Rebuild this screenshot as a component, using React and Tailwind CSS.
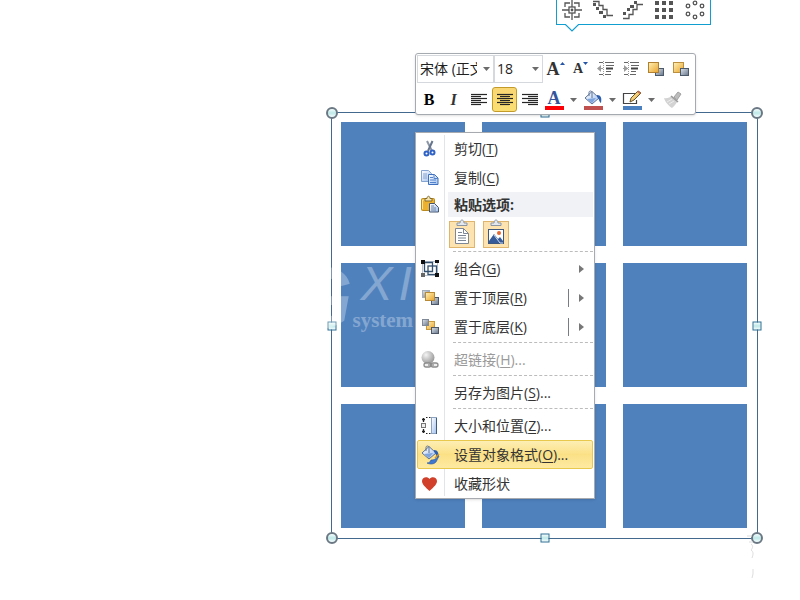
import React from "react";

const uiFont = "font-['Open_Sans','Noto_Sans_CJK_SC',sans-serif]";

/* ---------- layout gallery icons ---------- */

function GalleryIcon({ name }) {
  return (
    <svg width="22" height="20" viewBox="0 0 22 20" fill="none" stroke="#555" strokeWidth="1.3">
      {name === "center" && (
        <>
          <path d="M11 0v20M1 10h20" />
          <path d="M4 7V3h5M13 3h5v4M18 13v4h-5M9 17H4v-4" />
          <rect x="8" y="7" width="6" height="6" fill="#fff" />
          <circle cx="11" cy="10" r="1.4" fill="#555" stroke="none" />
        </>
      )}
      {name === "down" && (
        <>
          <path d="M1 1.500h6v4h4v4h4v6h6" />
          <path fill="#555" stroke="none" d="M1 3h3v3h-3zM4 7h3v3h-3zM7 11h4v3h-4zM11 15h3v3h-3z" />
        </>
      )}
      {name === "up" && (
        <>
          <path d="M1 18.500h6v-4h4v-5h4v-5h6" />
          <path fill="#555" stroke="none" d="M1 12h3v3h-3zM5 8h3v3h-3zM8 5h4v3h-4zM12 1h3v3h-3z" />
        </>
      )}
      {name === "grid" && (
        <path
          fill="#555"
          stroke="none"
          d="M2 1h4v4h-4zM9 1h4v4h-4zM16 1h4v4h-4zM2 8h4v4h-4zM9 8h4v4h-4zM16 8h4v4h-4zM2 15h4v4h-4zM9 15h4v4h-4zM16 15h4v4h-4z"
        />
      )}
      {name === "ring" && (
        <>
          <circle cx="11" cy="3" r="1.8" />
          <circle cx="18" cy="6" r="1.8" />
          <circle cx="18" cy="14" r="1.8" />
          <circle cx="11" cy="17" r="1.8" />
          <circle cx="4" cy="14" r="1.8" />
          <circle cx="4" cy="6" r="1.8" />
        </>
      )}
    </svg>
  );
}

function Gallery() {
  const items = [
    ["center", "居中"],
    ["down", "向下阶梯"],
    ["up", "向上阶梯"],
    ["grid", "矩阵"],
    ["ring", "环形"],
  ];
  return (
    <div className="absolute -top-5 left-[556px] flex h-[45px] w-[155px] items-end justify-around border border-[#109dd0] bg-white pb-1">
      {items.map(([name, label]) => (
        <button key={name} aria-label={label} className="block">
          <GalleryIcon name={name} />
        </button>
      ))}
      <svg className="absolute -bottom-2 left-2" width="14" height="9" viewBox="0 0 14 9">
        <path d="M0 0h14v1L7 8 0 1z" fill="#fff" />
        <path d="M0 1.5h.5L7 8l6.500-6.500H14" fill="none" stroke="#109dd0" strokeWidth="1.2" />
      </svg>
    </div>
  );
}

/* ---------- shared icon pieces ---------- */

function Defs() {
  return (
    <svg width="0" height="0" className="absolute" aria-hidden="true">
      <defs>
        <linearGradient id="gold" x1="0" y1="0" x2="1" y2="1">
          <stop offset="0" stopColor="#fff2b8" />
          <stop offset="1" stopColor="#e9a32b" />
        </linearGradient>
        <linearGradient id="slate" x1="0" y1="0" x2="1" y2="1">
          <stop offset="0" stopColor="#dfe5ec" />
          <stop offset="1" stopColor="#66758a" />
        </linearGradient>
        <linearGradient id="sheet" x1="0" y1="0" x2="1" y2="1">
          <stop offset="0" stopColor="#ffffff" />
          <stop offset="1" stopColor="#9fc0ef" />
        </linearGradient>
        <radialGradient id="globe" cx=".35" cy=".3" r=".8">
          <stop offset="0" stopColor="#f4f4f4" />
          <stop offset="1" stopColor="#8e8e8e" />
        </radialGradient>
      </defs>
    </svg>
  );
}

function Bucket({ fill = "url(#sheet)" }) {
  return (
    <>
      <path d="M9 1.500 16 8l-7 6-7-6z" fill={fill} stroke="#5f7396" />
      <path d="M6 6V2.500C6 .5 9 .5 9 2.500V8" fill="none" stroke="#5f7396" />
      <path d="M4 9l9-1-4 5z" fill="#7ea4dd" />
      <path d="M14 5c4 0 5 3 4 8-2-1-2-5-4-6z" fill="#2d5fae" />
    </>
  );
}

function MenuIcon({ name }) {
  return (
    <svg width="20" height="20" viewBox="0 0 20 20" fill="none">
      {name === "cut" && (
        <>
          <path d="M7 2 12 12" stroke="#8b96a6" strokeWidth="2" />
          <path d="M12.500 2 8 12" stroke="#66758c" strokeWidth="2" />
          <circle cx="6.500" cy="14.500" r="2" stroke="#2f62c4" strokeWidth="2" />
          <circle cx="12.500" cy="13.500" r="2" stroke="#2f62c4" strokeWidth="2" />
        </>
      )}
      {name === "copy" && (
        <>
          <path d="M1.500 2.500h7l3 3v8h-10z" fill="url(#sheet)" stroke="#86a4d0" />
          <path d="M3 6h4M3 8h4M3 10h4" stroke="#86a4d0" />
          <path d="M8.500 6.500h6l3.500 3.500v6.500H8.500z" fill="url(#sheet)" stroke="#3f70bd" />
          <path d="M14 6.500v4h4M10 9.500h3M10 12h6M10 14.500h6" stroke="#5483cc" />
        </>
      )}
      {name === "paste" && (
        <>
          <rect x="1.500" y="3.500" width="13" height="12" rx="1" fill="#ecb22f" stroke="#b98a20" />
          <path d="M2.500 14V5h3" stroke="#ffe48d" />
          <path d="M5 6V3.500h2c0-3 3-3 3 0h2V6z" fill="#f7e6b0" stroke="#806a30" />
          <path d="M9.500 8.500h5l4 4v4.500h-9z" fill="url(#sheet)" stroke="#46566e" />
          <path d="M11 11h3M11 13h5M11 15h5" stroke="#71839e" />
        </>
      )}
      {name === "group" && (
        <>
          <path d="M4 2.500h12M17.500 4v11M16 16.500H4M2.500 15V4" stroke="#b9c3d0" />
          <path d="M3 3.500h9.500v9H4.500V3" stroke="#34506f" strokeWidth="1.300" />
          <rect x="8" y="7" width="8.500" height="8.500" stroke="#34506f" strokeWidth="1.300" />
          <path d="M1 1h4v4H1zM15 1h4v3h-4zM15 14h4v4h-4z" fill="#111" />
          <path d="M1 14h4v4H1z" fill="#666" />
        </>
      )}
      {name === "front" && (
        <>
          <rect x="2.500" y="2.500" width="7" height="7" fill="url(#slate)" stroke="#a3adba" />
          <rect x="11.500" y="9.500" width="7" height="7" fill="url(#slate)" stroke="#4b5769" />
          <rect x="5.500" y="4.500" width="9" height="8" fill="url(#gold)" stroke="#b98a35" />
        </>
      )}
      {name === "back" && (
        <>
          <rect x="6.500" y="4.500" width="8" height="8" fill="url(#gold)" stroke="#c8993c" />
          <rect x="2.500" y="2.500" width="6" height="6" fill="url(#slate)" stroke="#7f8998" />
          <rect x="11.500" y="10.500" width="7" height="6" fill="url(#slate)" stroke="#4c5767" />
        </>
      )}
      {name === "link" && (
        <>
          <circle cx="8" cy="7.500" r="6.500" fill="url(#globe)" />
          <rect x="4" y="13" width="7" height="4" rx="2" stroke="#8c8c8c" strokeWidth="1.300" fill="#eee" />
          <rect x="11" y="13" width="7" height="4" rx="2" stroke="#8c8c8c" strokeWidth="1.300" fill="#eee" />
          <path d="M8 15h6" stroke="#8c8c8c" strokeWidth="1.300" />
        </>
      )}
      {name === "size" && (
        <>
          <path d="M3.500 2v4M3.500 13v4M2 3.500h3M2 15.500h3" stroke="#222" strokeWidth="1.300" />
          <path d="M6 1.500h5M6 17.500h5" stroke="#222" strokeDasharray="1.500 1.500" />
          <rect x="1.500" y="7.500" width="4" height="4" fill="#eee" stroke="#777" />
          <rect x="11.500" y="1.500" width="5" height="16" fill="url(#sheet)" stroke="#8ba3c0" />
          <path d="M16.500 2v16" stroke="#3d5a7e" />
        </>
      )}
      {name === "format" && (
        <>
          <Bucket />
          <path d="M18 10c-1 4-4 5-7 5-1 2-2 3-4 3 4 2 9 1 10-3l2-4z" fill="#3e78cf" stroke="#23509d" strokeWidth=".6" />
          <path d="m15 13 4-4" stroke="#d3972e" strokeWidth="1.500" />
        </>
      )}
      {name === "heart" && (
        <path d="M9.500 17C5 13 2 10 2 7c0-4 5.500-5 7.500-2 2-3 7.500-2 7.500 2 0 3-3 6-7.500 10z" fill="#d0402a" />
      )}
    </svg>
  );
}

/* ---------- mini toolbar ---------- */

function Caret() {
  return (
    <svg width="7" height="4" viewBox="0 0 7 4" aria-hidden="true">
      <path d="M0 0h7L3.500 4z" fill="#6b6b6b" />
    </svg>
  );
}

function LinesIcon({ align }) {
  const x = { left: [1, 1], center: [1, 4], right: [1, 7] }[align];
  return (
    <svg width="18" height="16" viewBox="0 0 18 16" stroke="#262626" strokeWidth="1.200">
      {[2.5, 4.5, 6.5, 8.5, 10.5, 12.5].map((y, i) => {
        const short = i % 2 === 1;
        return <path key={y} d={`M${short ? x[1] : x[0]} ${y}h${short ? 10 : 16}`} />;
      })}
    </svg>
  );
}

function IndentIcon({ out }) {
  return (
    <svg width="20" height="18" viewBox="0 0 20 18" fill="none">
      <path d="M3 2.500h4M9 2.500h9M3 14.500h4M9 14.500h6" stroke="#666" />
      <path d="M10 5.500h8M10 11.500h5" stroke="#666" />
      <path d="M10 8.500h7" stroke="#444" strokeWidth="2" />
      <path d="M7.500 1v16" stroke="#999" strokeDasharray="1 1" />
      <path d={out ? "M1 8.500 5 5v7z" : "M7 8.500 3 5v7z"} fill="#9b9b9b" />
      <path d="M2 8.500h5" stroke="#9b9b9b" />
    </svg>
  );
}

function LayerIcon({ back }) {
  return (
    <svg width="18" height="18" viewBox="0 0 18 18">
      {back && <rect x="1.500" y="2.500" width="10" height="10" fill="url(#gold)" stroke="#bc8f3e" />}
      <rect x="8.500" y="8.500" width="8" height="7" fill="url(#slate)" stroke="#4c596b" />
      {!back && <rect x="1.500" y="2.500" width="10" height="10" fill="url(#gold)" stroke="#b08030" />}
    </svg>
  );
}

function Field({ id, label, value, width }) {
  return (
    <div className={`relative ${width}`}>
      <label htmlFor={id} className="sr-only">{label}</label>
      <select
        id={id}
        className="h-7 w-full appearance-none border border-[#d5d8dd] bg-white pr-4 pl-0.5 text-sm leading-6 text-[#1f1f1f] outline-none"
      >
        <option>{value}</option>
      </select>
      <span className="pointer-events-none absolute inset-y-0 right-1 flex items-center">
        <Caret />
      </span>
    </div>
  );
}

function Tool({ label, children, className = "w-[25px]" }) {
  return (
    <button aria-label={label} className={`flex h-[25px] items-center justify-center ${className}`}>
      {children}
    </button>
  );
}

function ColorTool({ label, bar, children }) {
  return (
    <button aria-label={label} className="flex h-[25px] w-[39px] items-center gap-1.5">
      <span className="flex w-5 flex-col items-center">
        <span className="flex h-4 items-center justify-center">{children}</span>
        <span className={`h-1 w-[19px] ${bar}`} />
      </span>
      <Caret />
    </button>
  );
}

function MiniToolbar() {
  return (
    <div
      role="toolbar"
      aria-label="格式"
      className="absolute top-[53px] left-[415px] flex w-[281px] flex-col gap-1 rounded-[3px] border border-[#a5a9b0] bg-white p-px pb-0.5 shadow-sm"
    >
      <div className="flex items-center">
        <Field id="font" label="字体" value="宋体 (正文)" width="w-[77px]" />
        <Field id="size" label="字号" value="18" width="w-[49px]" />
        <Tool label="增大字号">
          <span className="font-['Liberation_Serif',serif] text-lg leading-6 font-bold text-[#333]">A</span>
          <svg width="5" height="14" viewBox="0 0 5 14"><path d="M0 3h5L2.500 0z" fill="#2454a6" /></svg>
        </Tool>
        <Tool label="减小字号">
          <span className="font-['Liberation_Serif',serif] text-sm leading-6 font-bold text-[#333]">A</span>
          <svg width="5" height="14" viewBox="0 0 5 14"><path d="M0 0h5L2.500 3z" fill="#2454a6" /></svg>
        </Tool>
        <Tool label="减少缩进"><IndentIcon out /></Tool>
        <Tool label="增加缩进"><IndentIcon /></Tool>
        <Tool label="上移一层"><LayerIcon /></Tool>
        <Tool label="下移一层"><LayerIcon back /></Tool>
      </div>
      <div className="flex items-center">
        <Tool label="加粗" className="w-6"><span className="font-['Liberation_Serif',serif] text-base leading-6 font-black text-black">B</span></Tool>
        <Tool label="倾斜"><span className="font-['Liberation_Serif',serif] text-base leading-6 font-bold text-[#333] italic">I</span></Tool>
        <Tool label="左对齐" className="w-[26px]"><LinesIcon align="left" /></Tool>
        <Tool label="居中" className="w-[25px] rounded-[3px] border border-[#c29b29] bg-gradient-to-b from-[#f9d774] to-[#fbdf72]">
          <LinesIcon align="center" />
        </Tool>
        <Tool label="右对齐"><LinesIcon align="right" /></Tool>
        <span className="w-0.5" />
        <ColorTool label="字体颜色" bar="bg-[#fb0007]">
          <span className="font-['Liberation_Serif',serif] text-lg leading-4 font-bold text-[#34559b]">A</span>
        </ColorTool>
        <ColorTool label="形状填充" bar="bg-[#c0504d]">
          <svg width="20" height="16" viewBox="0 0 20 16"><Bucket /></svg>
        </ColorTool>
        <ColorTool label="形状轮廓" bar="bg-[#4a7fc0]">
          <svg width="20" height="16" viewBox="0 0 20 16" fill="none">
            <path d="M14 3.500H1.500v10h13V10" stroke="#444" strokeWidth="1.200" />
            <path d="m8 12 1-4 7-7 3 2-7 7z" fill="url(#gold)" stroke="#6b542a" />
            <path d="m15 2 1-1.500L19 3l-1 1z" fill="#c46b4d" />
          </svg>
        </ColorTool>
        <Tool label="格式刷" className="w-[22px]">
          <svg width="20" height="18" viewBox="0 0 20 18">
            <path d="m12 6 4-5 3 2-4 6z" fill="#bdbdbd" stroke="#a2a2a2" />
            <path d="M2 7c3 1 6-1 8-2l6 5c-2 2-3 5-6 7-3-2-7-6-8-10z" fill="#d3d3d3" />
            <path d="m9 5 7 6" stroke="#999" strokeWidth="1.500" />
            <path d="m5 11 5-3m-3 5 5-3" stroke="#ededed" />
          </svg>
        </Tool>
      </div>
    </div>
  );
}

/* ---------- context menu ---------- */

function Item({ icon, text, mnemonic, more, arrow, split, disabled, active }) {
  const state = active
    ? "rounded-[2px] border-[#e9c84e] bg-gradient-to-b from-[#fdefb4] via-[#fbe085] to-[#fdeaa2]"
    : "border-transparent";
  return (
    <button
      role="menuitem"
      disabled={disabled}
      className={`relative flex h-[29px] w-full items-center border pr-2 text-left ${state} ${disabled ? "text-[#9a9a9a]" : "text-[#333]"}`}
    >
      <span className="flex w-9 pl-0.5">{icon && <MenuIcon name={icon} />}</span>
      <span className="flex-1 whitespace-nowrap">
        {text}
        {mnemonic && <>(<u className="underline-offset-2">{mnemonic}</u>)</>}
        {more && "..."}
      </span>
      {split && <span className="mr-2.5 h-[18px] w-px bg-[#777c87]" />}
      {arrow && (
        <svg width="5" height="8" viewBox="0 0 5 8"><path d="M0 0v8l5-4z" fill="#777" /></svg>
      )}
    </button>
  );
}

function Separator() {
  return <div role="separator" className="mt-px ml-9 h-[3px] border-t border-dashed border-[#bcbcbc]" />;
}

function PasteOption({ label, picture }) {
  return (
    <button aria-label={label} className="flex h-[27px] w-[26px] items-center justify-center border border-[#dfb56d] bg-[#fde3b0]">
      <svg width="20" height="27" viewBox="0 0 20 27" fill="none" className="shrink-0 overflow-visible">
        <path d="M5 4.500V2h3c0-4 4-4 4 0h3v2.500z" fill="#e3e8ee" stroke="#8c96a3" />
        {picture ? (
          <>
            <rect x="2.500" y="8.500" width="15" height="14" fill="#fff" stroke="#3d577d" />
            <path d="M3 20l5-7 4 5 2-2 3 4v2H3z" fill="#365b98" />
            <path d="m8 14 6 8h3" stroke="#cfdbee" />
            <circle cx="13" cy="12" r="2" fill="#e66a33" />
          </>
        ) : (
          <>
            <path d="M3.500 7.500h8l5 5v10h-13z" fill="#fff" stroke="#7d8795" />
            <path d="M11.500 7.500v5h5M6 11.500h4M6 14.500h8M6 17h8M6 19.500h8" stroke="#7d8795" />
          </>
        )}
      </svg>
    </button>
  );
}

function ContextMenu() {
  return (
    <div
      role="menu"
      className="absolute top-[132px] left-[415px] w-[180px] border border-[#a7abb0] bg-white px-px pt-px text-sm leading-5 shadow-sm"
    >
      <span className="absolute inset-y-0.5 left-7 w-px bg-[#e2e4e7]" />
      <Item icon="cut" text="剪切" mnemonic="T" />
      <Item icon="copy" text="复制" mnemonic="C" />
      <div className="relative flex h-[25px] items-center pl-px font-bold text-[#333]">
        <span className="flex w-[30px] pl-0.5"><MenuIcon name="paste" /></span>
        <span className="flex h-full flex-1 items-center bg-[#f0f2f5] pl-1.5">粘贴选项:</span>
      </div>
      <div className="flex h-[33px] gap-2 pt-1 pl-8">
        <PasteOption label="只保留文本" />
        <PasteOption label="图片" picture />
      </div>
      <Separator />
      <Item icon="group" text="组合" mnemonic="G" arrow />
      <Item icon="front" text="置于顶层" mnemonic="R" arrow split />
      <Item icon="back" text="置于底层" mnemonic="K" arrow split />
      <Separator />
      <Item icon="link" text="超链接" mnemonic="H" more disabled />
      <Separator />
      <Item text="另存为图片" mnemonic="S" more />
      <Separator />
      <Item icon="size" text="大小和位置" mnemonic="Z" more />
      <Item icon="format" text="设置对象格式" mnemonic="O" more active />
      <Item icon="heart" text="收藏形状" />
    </div>
  );
}

/* ---------- slide canvas ---------- */

function Handle({ place, round }) {
  const shape = round
    ? "size-3 rounded-full border-2 border-[#6b7884]"
    : "size-[9px] border border-[#2f6f93]";
  return <span className={`absolute -translate-x-1/2 -translate-y-1/2 bg-gradient-to-b from-[#f4fdfd] via-[#bfe8e8] to-[#f4fdfd] ${shape} ${place}`} />;
}

function Selection() {
  return (
    <div className="absolute top-[112px] left-[331px] grid size-[427px] grid-cols-3 grid-rows-3 gap-[17px] border border-[#44698f] pt-[9px] pr-2.5 pb-2.5 pl-[9px]">
      {Array.from({ length: 9 }, (_, i) => (
        <div key={i} className="bg-[#4f81bd]" />
      ))}
      <Handle round place="left-0 top-0" />
      <Handle round place="left-full top-0" />
      <Handle round place="left-0 top-full" />
      <Handle round place="left-full top-full" />
      <Handle place="left-1/2 top-0" />
      <Handle place="left-1/2 top-full" />
      <Handle place="left-0 top-1/2" />
      <Handle place="left-full top-1/2" />
    </div>
  );
}

function Watermark() {
  return (
    <div aria-hidden="true" className="absolute top-[254px] left-[284px] flex whitespace-nowrap text-white opacity-30">
      <span className="font-['Liberation_Sans',sans-serif] text-[88px] leading-[88px] font-bold italic">G</span>
      <span className="flex flex-col pt-1.5">
        <span className="flex gap-1.5 pl-2 font-['Liberation_Sans',sans-serif] text-5xl italic">
          <span>X</span>
          <span>I</span>
        </span>
        <span className="font-['Liberation_Serif',serif] text-[21px] leading-6 font-bold">system</span>
      </span>
    </div>
  );
}

export default function App() {
  return (
    <main className={`relative min-h-screen overflow-hidden bg-white ${uiFont}`}>
      <Defs />
      <Selection />
      <Watermark />
      <svg className="absolute top-[534px] left-[746px]" width="12" height="46" viewBox="0 0 12 46" fill="none" stroke="#ddd">
        <path d="M1 2h5M3 8h4M5 10c3 2 1 5 0 6 3 2 2 5 1 8M7 35v5l-1 4" />
      </svg>
      <Gallery />
      <MiniToolbar />
      <ContextMenu />
    </main>
  );
}
